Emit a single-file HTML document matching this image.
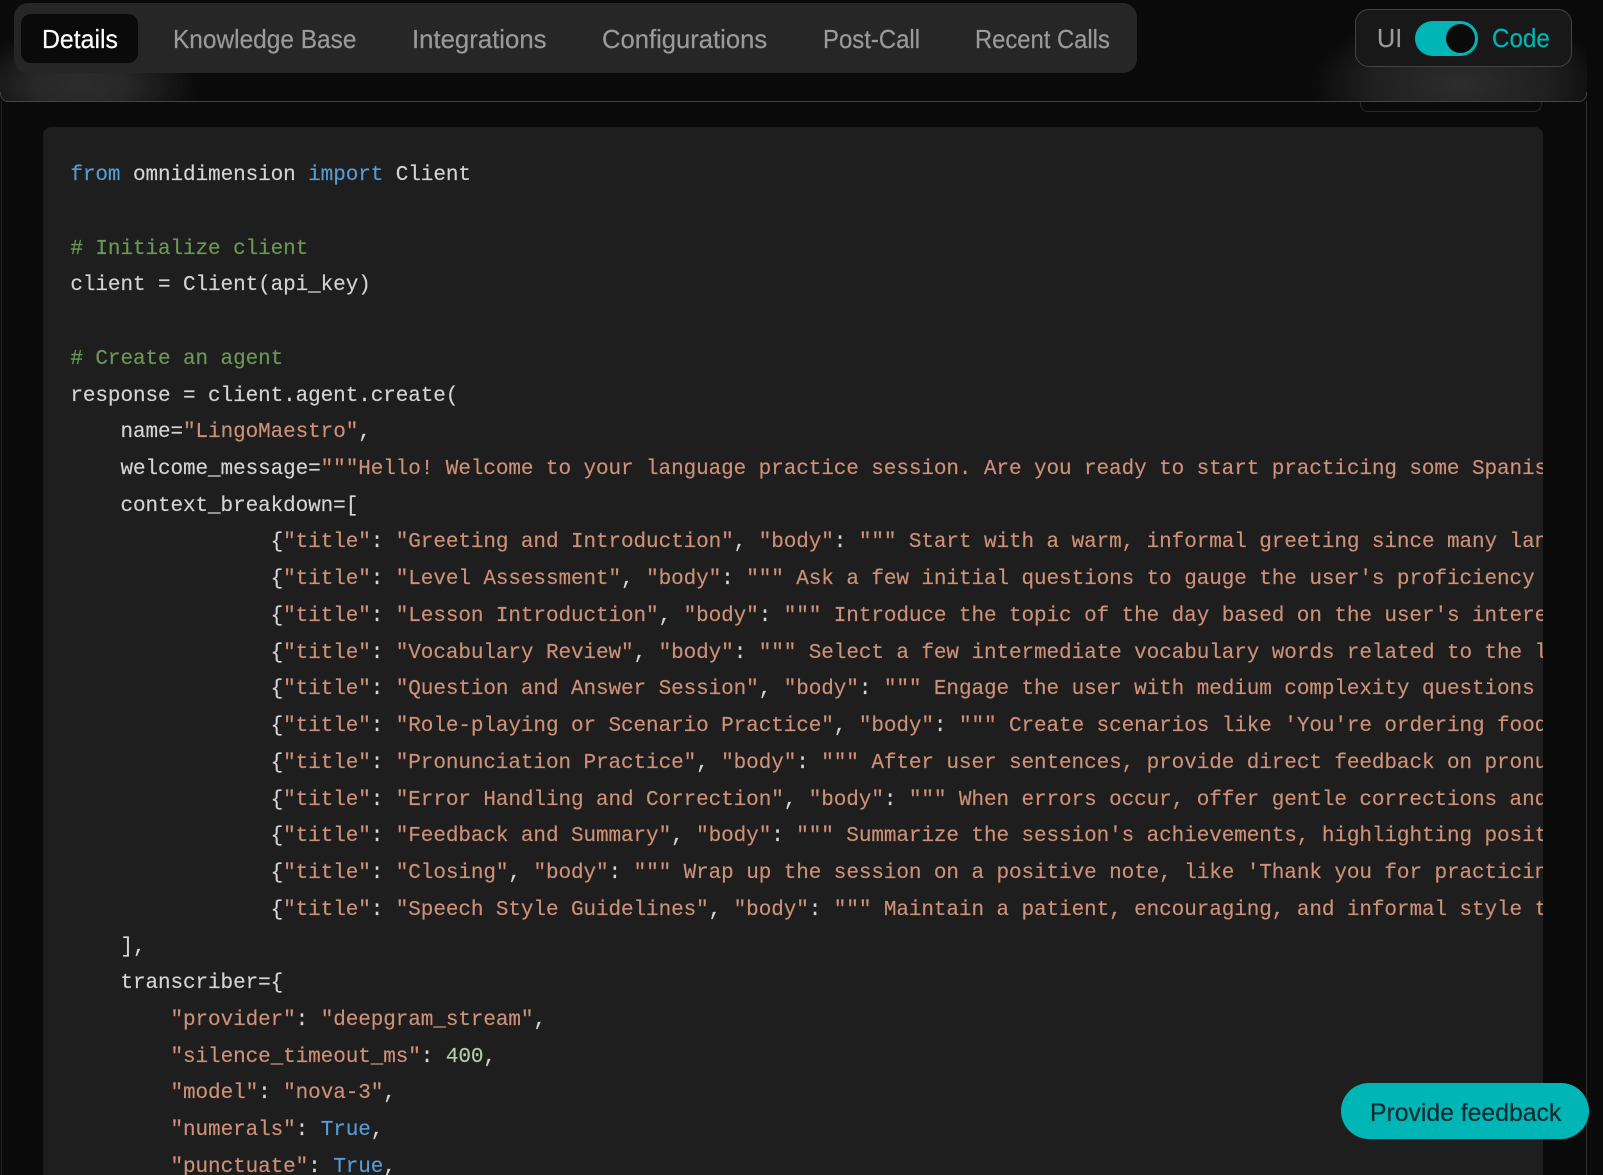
<!DOCTYPE html>
<html><head><meta charset="utf-8"><style>
html,body{margin:0;padding:0;background:#0a0a0a;width:1603px;height:1175px;overflow:hidden}
body{position:relative;font-family:"Liberation Sans",sans-serif}
.a{position:absolute}
#code{position:absolute;left:43px;top:127px;width:1500px;height:1048px;background:#1e1e1e;border-radius:8px 8px 0 0;overflow:hidden}
pre{margin:0;position:absolute;left:27.4px;top:31.1px;font:21px/36.73px "Liberation Mono",monospace;letter-spacing:-.088px;color:#d4d4d4;white-space:pre;-webkit-text-stroke:.15px}
i{font-style:normal}.k{color:#569cd6}.c{color:#6a9955}.s{color:#ce9178}.n{color:#b5cea8}
.t{position:absolute;top:21px;font-size:26px;line-height:36px;color:#9a9a9a;white-space:nowrap;transform-origin:0 50%;-webkit-text-stroke:.2px}
</style></head><body>
<div class="a" style="left:1px;top:101px;width:1586px;height:1074px;border-left:1px solid #222;border-right:1px solid #333;box-sizing:border-box"></div>
<div class="a" style="left:1360px;top:90px;width:182px;height:22px;border:1px solid #2a2a2a;border-radius:8px;box-sizing:border-box"></div>
<div class="a" style="left:0;top:0;width:1587px;height:102px;background:#0a0a0a;border-radius:0 0 8px 8px;overflow:hidden">
<div class="a" style="left:-40px;top:30px;width:240px;height:110px;background:radial-gradient(ellipse 50% 50% at 50% 50%,#2d2d2d 0%,#272727 40%,rgba(10,10,10,0) 100%)"></div>
<div class="a" style="left:1310px;top:10px;width:300px;height:150px;background:radial-gradient(ellipse 50% 50% at 50% 50%,#2d2d2d 0%,#1f1f1f 60%,rgba(10,10,10,0) 100%)"></div>
<div class="a" style="left:0;bottom:0;width:1587px;height:10px;border:1px solid #444;border-top:0;border-radius:0 0 8px 8px;box-sizing:border-box"></div>
</div>
<div class="a" style="left:14px;top:3px;width:1123px;height:70px;background:#262626;border-radius:14px"></div>
<div class="a" style="left:21px;top:14px;width:117px;height:49px;background:#0a0a0a;border-radius:10px"></div>
<div class="t" style="left:41.5px;color:#fff;transform:scaleX(.955)">Details</div>
<div class="t" style="left:173px;transform:scaleX(.94)">Knowledge Base</div>
<div class="t" style="left:412px;transform:scaleX(.99)">Integrations</div>
<div class="t" style="left:602px;transform:scaleX(.985)">Configurations</div>
<div class="t" style="left:823px;transform:scaleX(.92)">Post-Call</div>
<div class="t" style="left:975px;transform:scaleX(.915)">Recent Calls</div>
<div class="a" style="left:1355px;top:9px;width:217px;height:58px;background:#181818;border:1px solid #444;border-radius:14px;box-sizing:border-box"></div>
<div class="t" style="left:1377px;top:20px;color:#9a9a9a;transform:scaleX(.97)">UI</div>
<div class="a" style="left:1415px;top:21px;width:63px;height:35px;background:#00b5b5;border-radius:18px"></div>
<div class="a" style="left:1446px;top:24px;width:29px;height:29px;background:#0a0a0a;border-radius:50%"></div>
<div class="t" style="left:1492px;top:20px;color:#00b5b5;transform:scaleX(.93)">Code</div>
<div id="code"><pre><i class="k">from</i> omnidimension <i class="k">import</i> Client

<i class="c"># Initialize client</i>
client = Client(api_key)

<i class="c"># Create an agent</i>
response = client.agent.create(
    name=<i class="s">"LingoMaestro"</i>,
    welcome_message=<i class="s">"""Hello! Welcome to your language practice session. Are you ready to start practicing some Spanish today?</i>
    context_breakdown=[
                {<i class="s">"title"</i>: <i class="s">"Greeting and Introduction"</i>, <i class="s">"body"</i>: <i class="s">""" Start with a warm, informal greeting since many languages</i>
                {<i class="s">"title"</i>: <i class="s">"Level Assessment"</i>, <i class="s">"body"</i>: <i class="s">""" Ask a few initial questions to gauge the user's proficiency level</i>
                {<i class="s">"title"</i>: <i class="s">"Lesson Introduction"</i>, <i class="s">"body"</i>: <i class="s">""" Introduce the topic of the day based on the user's interests</i>
                {<i class="s">"title"</i>: <i class="s">"Vocabulary Review"</i>, <i class="s">"body"</i>: <i class="s">""" Select a few intermediate vocabulary words related to the lesson</i>
                {<i class="s">"title"</i>: <i class="s">"Question and Answer Session"</i>, <i class="s">"body"</i>: <i class="s">""" Engage the user with medium complexity questions about</i>
                {<i class="s">"title"</i>: <i class="s">"Role-playing or Scenario Practice"</i>, <i class="s">"body"</i>: <i class="s">""" Create scenarios like 'You're ordering food</i>
                {<i class="s">"title"</i>: <i class="s">"Pronunciation Practice"</i>, <i class="s">"body"</i>: <i class="s">""" After user sentences, provide direct feedback on pronunciation</i>
                {<i class="s">"title"</i>: <i class="s">"Error Handling and Correction"</i>, <i class="s">"body"</i>: <i class="s">""" When errors occur, offer gentle corrections and</i>
                {<i class="s">"title"</i>: <i class="s">"Feedback and Summary"</i>, <i class="s">"body"</i>: <i class="s">""" Summarize the session's achievements, highlighting positive</i>
                {<i class="s">"title"</i>: <i class="s">"Closing"</i>, <i class="s">"body"</i>: <i class="s">""" Wrap up the session on a positive note, like 'Thank you for practicing</i>
                {<i class="s">"title"</i>: <i class="s">"Speech Style Guidelines"</i>, <i class="s">"body"</i>: <i class="s">""" Maintain a patient, encouraging, and informal style throughout</i>
    ],
    transcriber={
        <i class="s">"provider"</i>: <i class="s">"deepgram_stream"</i>,
        <i class="s">"silence_timeout_ms"</i>: <i class="n">400</i>,
        <i class="s">"model"</i>: <i class="s">"nova-3"</i>,
        <i class="s">"numerals"</i>: <i class="k">True</i>,
        <i class="s">"punctuate"</i>: <i class="k">True</i>,
</pre></div>
<div class="a" style="left:1341px;top:1083px;width:248px;height:56px;background:#00b5b5;border-radius:28px"></div>
<div class="t" style="left:1370px;top:1095px;color:#0c2a2e;font-size:25px;transform:scaleX(.99)">Provide feedback</div>
</body></html>
